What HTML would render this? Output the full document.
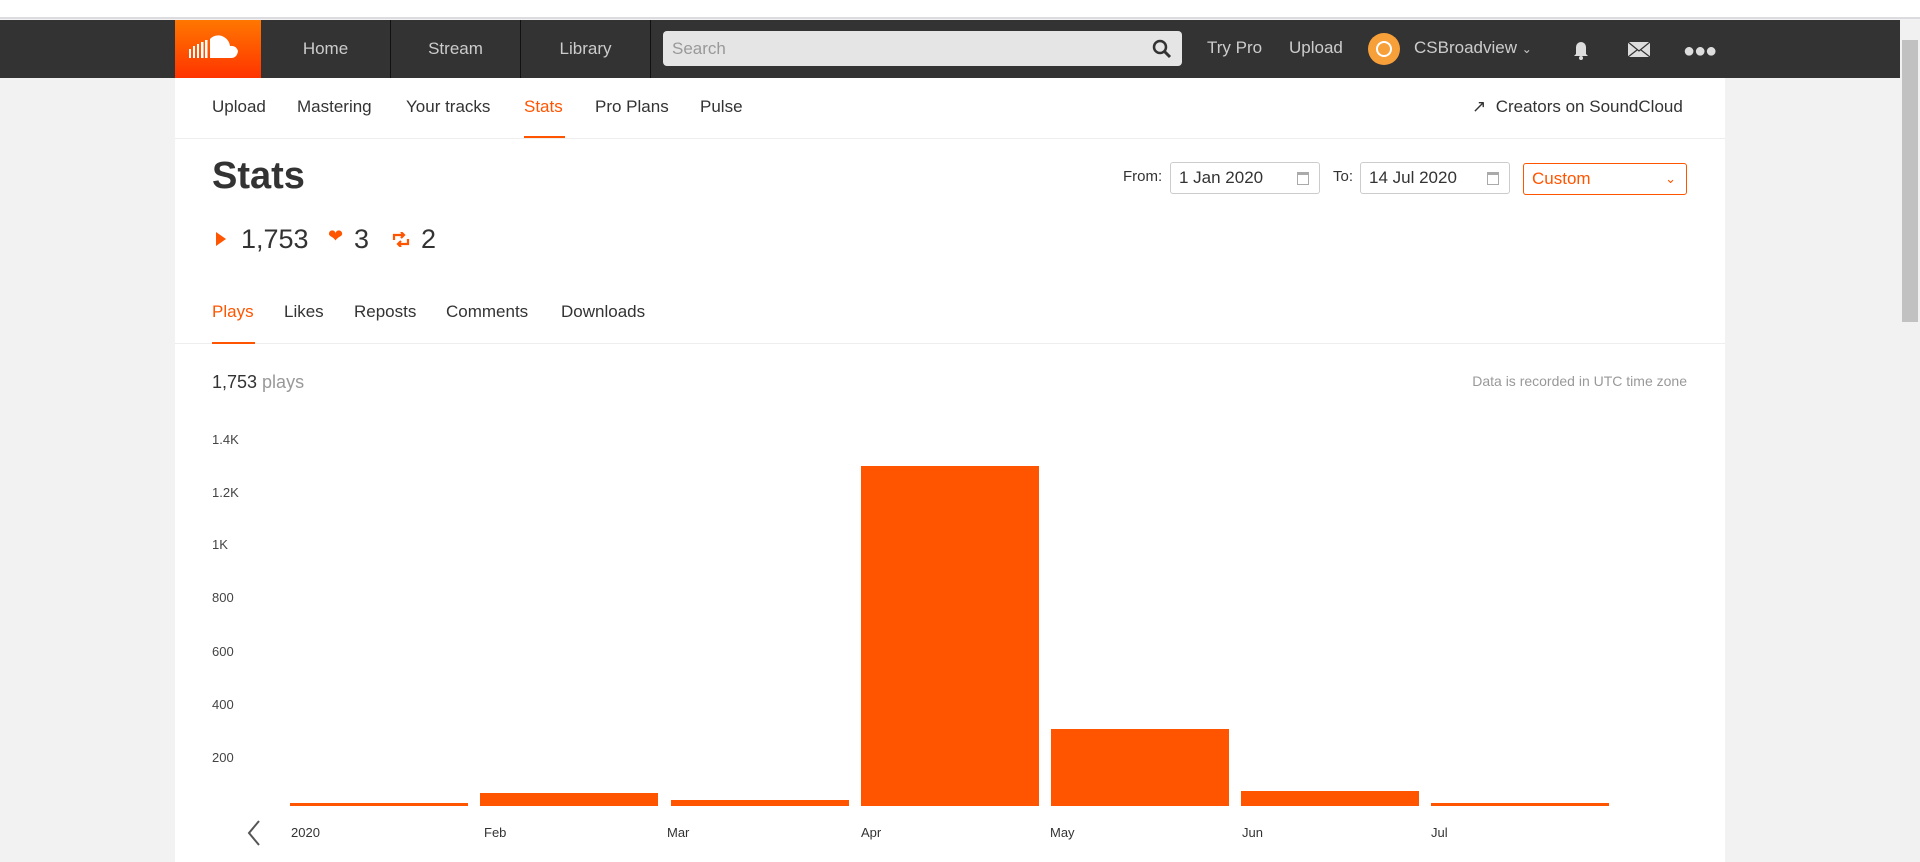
<!DOCTYPE html>
<html><head><meta charset="utf-8"><style>
*{margin:0;padding:0;box-sizing:border-box}
body{width:1920px;height:862px;overflow:hidden;background:#f2f2f2;font-family:"Liberation Sans",sans-serif;position:relative;color:#333}
.a{position:absolute;white-space:nowrap}
.top{left:0;top:0;width:1920px;height:19px;background:#fff;border-bottom:2px solid #dcdce0}
.hdr{left:0;top:20px;width:1900px;height:58px;background:#333}
.logo{left:175px;top:20px;width:86px;height:58px;background:linear-gradient(#f70,#f30)}
.tab{top:20px;height:58px;width:130px;border-right:1px solid #111;color:#ccc;font-size:17px;line-height:58px;text-align:center}
.main{left:175px;top:78px;width:1550px;height:784px;background:#fff}
.nav{font-size:17px;color:#333;top:97px}
.w{color:#ccc;font-size:17px;top:38px}
.yl{font-size:13px;color:#444;left:212px}
.xl{font-size:13px;color:#333;top:825px}
.bar{position:absolute;background:#f50;bottom:56px;width:178px}
.inp{top:162px;height:32px;border:1px solid #ccc;border-radius:3px;font-size:17px;line-height:30px;padding-left:8px;color:#333}
.cal{position:absolute;right:10px;top:9px;width:12px;height:13px;border:1px solid #aaa;border-top:3px solid #aaa}
</style></head><body>
<div class="a top"></div>
<div class="a hdr"></div>
<div class="a logo"><svg width="86" height="58"><g fill="#fff"><rect x="14" y="29" width="2" height="9"/><rect x="18" y="26" width="2" height="12"/><rect x="22" y="24" width="2" height="14"/><rect x="26" y="22" width="2.5" height="16"/><rect x="30" y="20" width="2.5" height="18"/><path d="M35 38V19q5-5 12-3 7 3 8 10 6-1 8 5-1 7-7 7z"/></g></svg></div>
<div class="a tab" style="left:261px">Home</div>
<div class="a tab" style="left:391px">Stream</div>
<div class="a tab" style="left:521px">Library</div>
<div class="a" style="left:663px;top:31px;width:519px;height:35px;background:#e5e5e5;border-radius:4px;color:#999;font-size:17px;line-height:35px;padding-left:9px">Search
<svg style="position:absolute;right:10px;top:8px" width="20" height="20"><circle cx="8" cy="8" r="6" stroke="#333" stroke-width="2.5" fill="none"/><path d="M12 12l6 6" stroke="#333" stroke-width="3"/></svg></div>
<div class="a w" style="left:1207px">Try Pro</div>
<div class="a w" style="left:1289px">Upload</div>
<div class="a" style="left:1368px;top:33px;width:32px;height:32px;border-radius:50%;background:#f7a03a"><div style="margin:8px;width:16px;height:16px;border:2px solid #fff;border-radius:50%"></div></div>
<div class="a w" style="left:1414px">CSBroadview <span style="font-size:12px">&#8964;</span></div>
<svg class="a" style="left:1573px;top:38px" width="16" height="22"><path d="M3 16V9a5 5 0 0110 0v7l2 2H1z" fill="#ddd"/><circle cx="8" cy="20" r="2" fill="#ddd"/></svg>
<svg class="a" style="left:1627px;top:41px" width="24" height="17"><rect x="1" y="1" width="22" height="15" fill="#ddd"/><path d="M1 1l11 9 11-9M1 16l9-7M23 16l-9-7" stroke="#333" stroke-width="1.2" fill="none"/></svg>
<div class="a" style="left:1683px;top:40px;color:#ddd;font-size:20px;letter-spacing:-1px">&#9679;&#9679;&#9679;</div>
<div class="a" style="left:1900px;top:20px;width:20px;height:842px;background:#f1f1f1"></div>
<div class="a" style="left:1902px;top:40px;width:16px;height:282px;background:#c1c1c1"></div>
<div class="a main"></div>
<div class="a" style="left:175px;top:138px;width:1550px;height:1px;background:#eee"></div>
<div class="a nav" style="left:212px">Upload</div>
<div class="a nav" style="left:297px">Mastering</div>
<div class="a nav" style="left:406px">Your tracks</div>
<div class="a nav" style="left:524px;color:#f50">Stats</div>
<div class="a" style="left:524px;top:136px;width:41px;height:2px;background:#f50"></div>
<div class="a nav" style="left:595px">Pro Plans</div>
<div class="a nav" style="left:700px">Pulse</div>
<div class="a nav" style="left:1472px">&#8599;&nbsp; Creators on SoundCloud</div>
<div class="a" style="left:212px;top:155px;font-size:38px;font-weight:bold;color:#333">Stats</div>
<div class="a" style="left:1123px;top:168px;font-size:15px">From:</div>
<div class="a inp" style="left:1170px;width:150px">1 Jan 2020<div class="cal"></div></div>
<div class="a" style="left:1333px;top:168px;font-size:15px">To:</div>
<div class="a inp" style="left:1360px;width:150px">14 Jul 2020<div class="cal"></div></div>
<div class="a inp" style="left:1523px;top:163px;width:164px;border-color:#f50;color:#f50">Custom<span style="position:absolute;right:10px;font-size:13px">&#8964;</span></div>
<div class="a" style="left:216px;top:232px;width:0;height:0;border-left:10px solid #f50;border-top:7px solid transparent;border-bottom:7px solid transparent"></div>
<div class="a" style="left:241px;top:224px;font-size:27px">1,753</div>
<div class="a" style="left:328px;top:226px;font-size:18px;color:#f50">&#10084;</div>
<div class="a" style="left:354px;top:224px;font-size:27px">3</div>
<svg class="a" style="left:392px;top:232px" width="18" height="15"><path d="M2 8V3h10M9 0l3 3-3 3M16 7v5H6M9 9l-3 3 3 3" stroke="#f50" stroke-width="2.2" fill="none"/></svg>
<div class="a" style="left:421px;top:224px;font-size:27px">2</div>
<div class="a nav" style="left:212px;top:302px;color:#f50">Plays</div>
<div class="a nav" style="left:284px;top:302px">Likes</div>
<div class="a nav" style="left:354px;top:302px">Reposts</div>
<div class="a nav" style="left:446px;top:302px">Comments</div>
<div class="a nav" style="left:561px;top:302px">Downloads</div>
<div class="a" style="left:175px;top:343px;width:1550px;height:1px;background:#eee"></div>
<div class="a" style="left:212px;top:342px;width:43px;height:2px;background:#f50"></div>
<div class="a" style="left:212px;top:372px;font-size:18px">1,753 <span style="color:#999">plays</span></div>
<div class="a" style="right:233px;top:373px;font-size:14px;color:#999">Data is recorded in UTC time zone</div>
<div class="a yl" style="top:432px">1.4K</div>
<div class="a yl" style="top:485px">1.2K</div>
<div class="a yl" style="top:537px">1K</div>
<div class="a yl" style="top:590px">800</div>
<div class="a yl" style="top:644px">600</div>
<div class="a yl" style="top:697px">400</div>
<div class="a yl" style="top:750px">200</div>
<div class="bar" style="left:290px;height:3px"></div>
<div class="bar" style="left:480px;height:13px"></div>
<div class="bar" style="left:671px;height:6px"></div>
<div class="bar" style="left:861px;height:340px"></div>
<div class="bar" style="left:1051px;height:77px"></div>
<div class="bar" style="left:1241px;height:15px"></div>
<div class="bar" style="left:1431px;height:3px"></div>
<svg class="a" style="left:246px;top:819px" width="16" height="28"><path d="M13 2L3 14l10 12" stroke="#555" stroke-width="2" fill="none"/></svg>
<div class="a xl" style="left:291px">2020</div>
<div class="a xl" style="left:484px">Feb</div>
<div class="a xl" style="left:667px">Mar</div>
<div class="a xl" style="left:861px">Apr</div>
<div class="a xl" style="left:1050px">May</div>
<div class="a xl" style="left:1242px">Jun</div>
<div class="a xl" style="left:1431px">Jul</div>
</body></html>
